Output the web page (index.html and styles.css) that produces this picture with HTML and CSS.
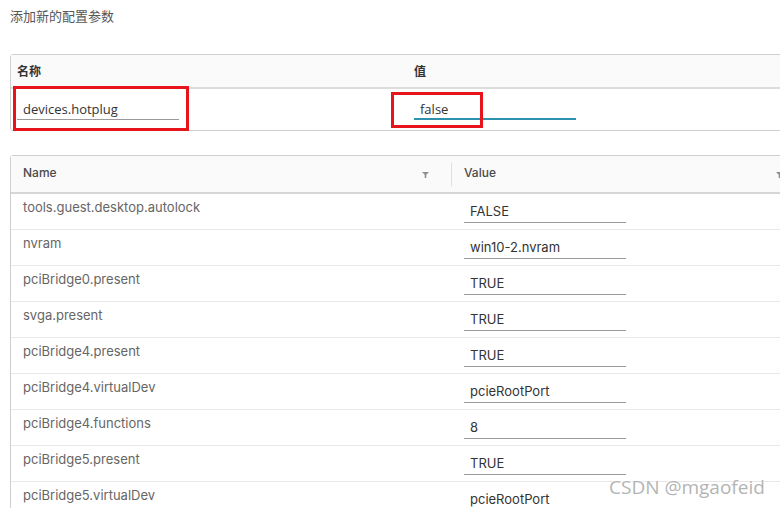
FILE: index.html
```html
<!DOCTYPE html>
<html lang="zh">
<head>
  <meta charset="UTF-8">
  <title>添加新的配置参数</title>
  <link rel="stylesheet" href="styles.css">
</head>
<body>

<div class="page">
  <div class="section-title">添加新的配置参数</div>

  <div class="new-param">
    <div class="np-head">
      <div class="np-col np-name">名称</div>
      <div class="np-col np-value">值</div>
    </div>
    <div class="np-row">
      <div class="np-col np-name">
        <div class="np-input">devices.hotplug</div>
        <div class="mark mark-name"></div>
      </div>
      <div class="np-col np-value">
        <div class="np-input focused">false</div>
        <div class="mark mark-value"></div>
      </div>
    </div>
  </div>

  <div class="grid">
    <div class="grid-head">
      <div class="gcol gname">
        <span>Name</span>
        <svg class="filter" width="7" height="6" viewBox="0 0 7 6"><path d="M0 0h7L4.3 2.8V6H2.7V2.8z" fill="#8e8e8e"/></svg>
      </div>
      <div class="gcol gvalue">
        <span>Value</span>
        <svg class="filter" width="7" height="6" viewBox="0 0 7 6"><path d="M0 0h7L4.3 2.8V6H2.7V2.8z" fill="#8e8e8e"/></svg>
      </div>
    </div>
    <div class="grid-row">
      <div class="gcol gname">tools.guest.desktop.autolock</div>
      <div class="gcol gvalue"><div class="cell-input">FALSE</div></div>
    </div>
    <div class="grid-row">
      <div class="gcol gname">nvram</div>
      <div class="gcol gvalue"><div class="cell-input">win10-2.nvram</div></div>
    </div>
    <div class="grid-row">
      <div class="gcol gname">pciBridge0.present</div>
      <div class="gcol gvalue"><div class="cell-input">TRUE</div></div>
    </div>
    <div class="grid-row">
      <div class="gcol gname">svga.present</div>
      <div class="gcol gvalue"><div class="cell-input">TRUE</div></div>
    </div>
    <div class="grid-row">
      <div class="gcol gname">pciBridge4.present</div>
      <div class="gcol gvalue"><div class="cell-input">TRUE</div></div>
    </div>
    <div class="grid-row">
      <div class="gcol gname">pciBridge4.virtualDev</div>
      <div class="gcol gvalue"><div class="cell-input">pcieRootPort</div></div>
    </div>
    <div class="grid-row">
      <div class="gcol gname">pciBridge4.functions</div>
      <div class="gcol gvalue"><div class="cell-input">8</div></div>
    </div>
    <div class="grid-row">
      <div class="gcol gname">pciBridge5.present</div>
      <div class="gcol gvalue"><div class="cell-input">TRUE</div></div>
    </div>
    <div class="grid-row">
      <div class="gcol gname">pciBridge5.virtualDev</div>
      <div class="gcol gvalue"><div class="cell-input">pcieRootPort</div></div>
    </div>
  </div>
</div>

<div class="watermark">CSDN @mgaofeid</div>

</body>
</html>
```

FILE: styles.css
```css
* { margin: 0; padding: 0; box-sizing: border-box; }

body {
  font-family: 'Inter', 'Noto Sans CJK SC', sans-serif;
  background: #fff;
  color: #565656;
  overflow: hidden;
  width: 780px;
  height: 508px;
  position: relative;
}

.page { padding-left: 10px; }

.section-title {
  font-family: 'Noto Sans CJK SC', sans-serif;
  font-size: 13px;
  line-height: 18px;
  padding-top: 7px;
  height: 54px;
  color: #565656;
}

/* new parameter box */
.new-param {
  width: 800px;
  border: 1px solid #cfcfcf;
  border-radius: 3px;
}

.np-head {
  display: flex;
  height: 34px;
  padding-bottom: 1px;
  background: #fafafa;
  border-bottom: 2px solid #dcdcdc;
  font-family: 'Noto Sans CJK SC', sans-serif;
  font-weight: bold;
  font-size: 12px;
  color: #333;
  align-items: center;
}

.np-row {
  display: flex;
  height: 41px;
}

.np-col { position: relative; }
.np-name { width: 397px; padding-left: 6px; }
.np-value { flex: 1; padding-left: 6px; }

.np-input {
  font-family: 'Open Sans', sans-serif;
  font-size: 13px;
  color: #333;
  width: 162px;
  height: 31px;
  padding: 12px 0 0 6px;
  line-height: 16px;
  border-bottom: 1px solid #9a9a9a;
}

.np-input.focused {
  border-bottom: 2px solid #2f92ad;
}

/* red annotation boxes */
.mark {
  position: absolute;
  border: 3px solid #e8141c;
}
.mark-name { left: 2px; top: -3px; width: 176px; height: 45px; }
.mark-value { left: -17px; top: 3px; width: 92px; height: 36px; }

/* grid */
.grid {
  margin-top: 24px;
  width: 800px;
  border: 1px solid #cfcfcf;
  border-radius: 3px;
  font-size: 13px;
}

.grid-head {
  display: flex;
  height: 38px;
  padding-bottom: 3px;
  background: #fafafa;
  border-bottom: 2px solid #d6d6d6;
  font-weight: 500;
  font-size: 12px;
  color: #4a4a4a;
}

.grid-head .gcol {
  display: flex;
  align-items: center;
  justify-content: space-between;
}

.gcol { padding-left: 12px; }
.gname { width: 441px; padding-right: 22px; }
.gvalue { flex: 1; }

.grid-head .gname {
  border-right: 1px solid #e0e0e0;
  margin-top: 6px;
  height: 24px;
  padding-bottom: 4px;
}
.grid-head .gname .filter { margin-top: 5px; }
.grid-head .gvalue { padding-right: 26px; }
.grid-head .gvalue .filter { margin-top: 4px; }

.grid-row {
  display: flex;
  height: 36px;
  border-bottom: 1px solid #e8e8e8;
}

.grid-row .gname {
  padding-top: 5px;
  line-height: 16px;
  color: #666;
}

.cell-input {
  margin-top: 8px;
  width: 162px;
  height: 21px;
  padding: 1px 0 0 6px;
  line-height: 16px;
  color: #333;
  border-bottom: 1px solid #9a9a9a;
}

.watermark {
  position: absolute;
  left: 609px;
  top: 474px;
  font-family: 'Open Sans', sans-serif;
  font-size: 19px;
  color: #b4b4b4;
  text-shadow: 0 0 2px #fff, 0 0 1px #fff;
}
```
